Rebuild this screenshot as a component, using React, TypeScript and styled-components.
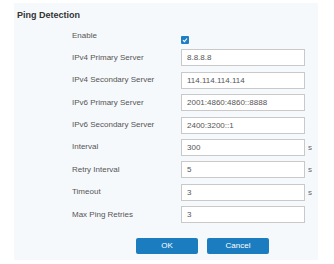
import React from 'react'
import styled, { createGlobalStyle } from 'styled-components'

const GlobalStyle = createGlobalStyle`
  html, body {
    margin: 0;
    padding: 0;
    background: #ffffff;
    font-family: "Liberation Sans", Arial, sans-serif;
  }
`

const Panel = styled.section`
  margin: 3px 0 0 14px;
  width: 304px;
  height: 257px;
  background: #f6f9fb;
  box-sizing: border-box;
  padding: 7px 0 0 3px;
`

const Title = styled.h2`
  margin: 0;
  font-size: 9px;
  line-height: 11px;
  font-weight: bold;
  color: #333;
`

const Form = styled.div`
  display: flex;
  flex-direction: column;
  gap: 5.4px;
  margin: 6px 0 0 55px;
`

const Row = styled.div`
  display: grid;
  grid-template-columns: 106px 124px auto;
  column-gap: 3px;
  align-items: center;
  height: 17px;
`

const Label = styled.span`
  font-size: 8px;
  color: #555;
  margin-top: -1px;
`

const Input = styled.div`
  height: 17px;
  box-sizing: border-box;
  border: 1px solid #c9c9c9;
  background: #fff;
  font-size: 8px;
  color: #555;
  padding: 0 5px;
  display: flex;
  align-items: center;
`

const Unit = styled.span`
  font-size: 8px;
  color: #666;
`

const Check = styled.span`
  align-self: end;
  width: 8px;
  height: 8px;
  border-radius: 1px;
  background: #1f7fc4;
  display: flex;
  align-items: center;
  justify-content: center;
`

const Buttons = styled.div`
  display: flex;
  gap: 9px;
  margin: 14.4px 0 0 119px;
`

const Button = styled.button`
  width: 62px;
  height: 16px;
  border: none;
  border-radius: 2px;
  background: #1b7dbf;
  color: #fff;
  font-family: inherit;
  font-size: 8px;
  padding: 0;
`

const fields: { label: string; value: string; unit?: string }[] = [
  { label: 'IPv4 Primary Server', value: '8.8.8.8' },
  { label: 'IPv4 Secondary Server', value: '114.114.114.114' },
  { label: 'IPv6 Primary Server', value: '2001:4860:4860::8888' },
  { label: 'IPv6 Secondary Server', value: '2400:3200::1' },
  { label: 'Interval', value: '300', unit: 's' },
  { label: 'Retry Interval', value: '5', unit: 's' },
  { label: 'Timeout', value: '3', unit: 's' },
  { label: 'Max Ping Retries', value: '3' },
]

const App = () => {
  return (
    <>
      <GlobalStyle />
      <Panel>
        <Title>Ping Detection</Title>
        <Form>
          <Row>
            <Label>Enable</Label>
            <Check>
              <svg width="6" height="6" viewBox="0 0 6 6">
                <path d="M1 3.2 L2.4 4.6 L5 1.5" stroke="#fff" strokeWidth="1.1" fill="none" />
              </svg>
            </Check>
          </Row>
          {fields.map((f) => (
            <Row key={f.label}>
              <Label>{f.label}</Label>
              <Input>{f.value}</Input>
              {f.unit && <Unit>{f.unit}</Unit>}
            </Row>
          ))}
        </Form>
        <Buttons>
          <Button>OK</Button>
          <Button>Cancel</Button>
        </Buttons>
      </Panel>
    </>
  )
}

export default App
